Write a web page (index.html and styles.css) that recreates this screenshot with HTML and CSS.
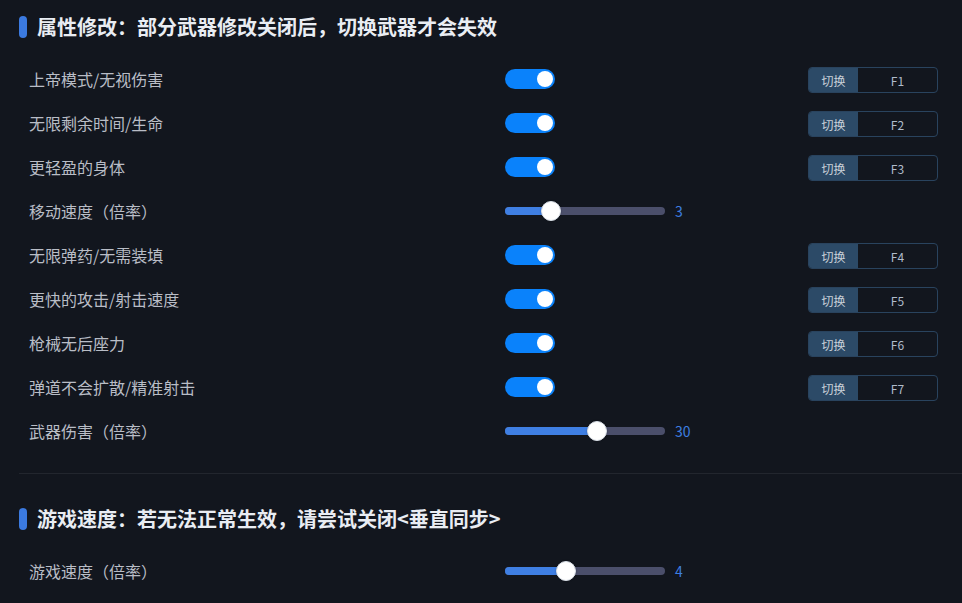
FILE: index.html
```html
<!DOCTYPE html>
<html lang="zh-CN">
<head>
<meta charset="utf-8">
<title>属性修改</title>
<link rel="stylesheet" href="styles.css">
</head>
<body>
<div class="panel">
  <section class="section">
    <h2 class="section-title">属性修改：部分武器修改关闭后，切换武器才会失效</h2>
    <div class="rows">
      <div class="row">
        <span class="label">上帝模式/无视伤害</span>
        <div class="control"><span class="switch"><span class="knob"></span></span></div>
        <div class="hotkey"><span class="hk-label">切换</span><span class="hk-key">F1</span></div>
      </div>
      <div class="row">
        <span class="label">无限剩余时间/生命</span>
        <div class="control"><span class="switch"><span class="knob"></span></span></div>
        <div class="hotkey"><span class="hk-label">切换</span><span class="hk-key">F2</span></div>
      </div>
      <div class="row">
        <span class="label">更轻盈的身体</span>
        <div class="control"><span class="switch"><span class="knob"></span></span></div>
        <div class="hotkey"><span class="hk-label">切换</span><span class="hk-key">F3</span></div>
      </div>
      <div class="row">
        <span class="label">移动速度（倍率）</span>
        <div class="control slider">
          <div class="track" style="--p:46px"><div class="fill"></div><div class="thumb"></div></div>
          <span class="value">3</span>
        </div>
      </div>
      <div class="row">
        <span class="label">无限弹药/无需装填</span>
        <div class="control"><span class="switch"><span class="knob"></span></span></div>
        <div class="hotkey"><span class="hk-label">切换</span><span class="hk-key">F4</span></div>
      </div>
      <div class="row">
        <span class="label">更快的攻击/射击速度</span>
        <div class="control"><span class="switch"><span class="knob"></span></span></div>
        <div class="hotkey"><span class="hk-label">切换</span><span class="hk-key">F5</span></div>
      </div>
      <div class="row">
        <span class="label">枪械无后座力</span>
        <div class="control"><span class="switch"><span class="knob"></span></span></div>
        <div class="hotkey"><span class="hk-label">切换</span><span class="hk-key">F6</span></div>
      </div>
      <div class="row">
        <span class="label">弹道不会扩散/精准射击</span>
        <div class="control"><span class="switch"><span class="knob"></span></span></div>
        <div class="hotkey"><span class="hk-label">切换</span><span class="hk-key">F7</span></div>
      </div>
      <div class="row">
        <span class="label">武器伤害（倍率）</span>
        <div class="control slider">
          <div class="track" style="--p:92px"><div class="fill"></div><div class="thumb"></div></div>
          <span class="value">30</span>
        </div>
      </div>
    </div>
  </section>
  <hr class="divider">
  <section class="section section-second">
    <h2 class="section-title">游戏速度：若无法正常生效，请尝试关闭&lt;垂直同步&gt;</h2>
    <div class="rows">
      <div class="row">
        <span class="label">游戏速度（倍率）</span>
        <div class="control slider">
          <div class="track" style="--p:61px"><div class="fill"></div><div class="thumb"></div></div>
          <span class="value">4</span>
        </div>
      </div>
    </div>
  </section>
</div>
</body>
</html>
```

FILE: styles.css
```css
html, body {
  margin: 0;
  background: #12161e;
  overflow: hidden;
}
body {
  font-family: "Noto Sans CJK SC", "Noto Sans", sans-serif;
  color: #b6bac3;
}
.panel {
  padding: 16px 0 0 19px;
}
.section-title {
  display: flex;
  align-items: center;
  gap: 10px;
  margin: 0;
  height: 22px;
  line-height: 22px;
  font-size: 20px;
  font-weight: 700;
  color: #e9edf3;
  white-space: nowrap;
}
.section-title::before {
  content: "";
  flex: none;
  width: 8px;
  height: 22px;
  border-radius: 4px;
  background: #3b7ae0;
}
.rows {
  margin-top: 19px;
  padding-left: 10px;
}
.row {
  display: grid;
  grid-template-columns: 476px 303px 130px;
  height: 44px;
  align-items: center;
}
.label {
  font-size: 16px;
  color: #b9bdc6;
  white-space: nowrap;
}
.control {
  display: flex;
  align-items: center;
}
.switch {
  position: relative;
  display: inline-block;
  width: 50px;
  height: 20px;
  border-radius: 10px;
  background: #0a82fb;
}
.knob {
  position: absolute;
  top: 2px;
  right: 2px;
  width: 16px;
  height: 16px;
  border-radius: 50%;
  background: #ffffff;
}
.slider {
  gap: 10px;
}
.track {
  position: relative;
  width: 160px;
  height: 8px;
  border-radius: 4px;
  background: #4b4f6b;
}
.fill {
  width: var(--p);
  height: 100%;
  border-radius: 4px;
  background: #3f7fe3;
}
.thumb {
  position: absolute;
  top: 50%;
  left: var(--p);
  width: 18px;
  height: 18px;
  border-radius: 50%;
  background: #ffffff;
  border: 1px solid #d9dfe7;
  box-shadow: 0 0 2px rgba(0, 0, 0, 0.3);
  transform: translate(-50%, -50%);
}
.value {
  font-size: 14px;
  color: #3d7ee0;
}
.hotkey {
  display: flex;
  width: 130px;
  height: 26px;
  margin-top: 2px;
  box-sizing: border-box;
  border: 1px solid #29435e;
  border-radius: 4px;
  overflow: hidden;
  font-size: 12px;
}
.hk-label {
  width: 49px;
  display: flex;
  align-items: center;
  justify-content: center;
  background: #2c4a67;
  color: #c9d1da;
}
.hk-key {
  flex: 1;
  display: flex;
  align-items: center;
  justify-content: center;
  color: #b0bccb;
}
.divider {
  margin: 20px 0 0;
  border: 0;
  height: 1px;
  background: #22262e;
}
.section-second {
  padding-top: 34px;
}
```
